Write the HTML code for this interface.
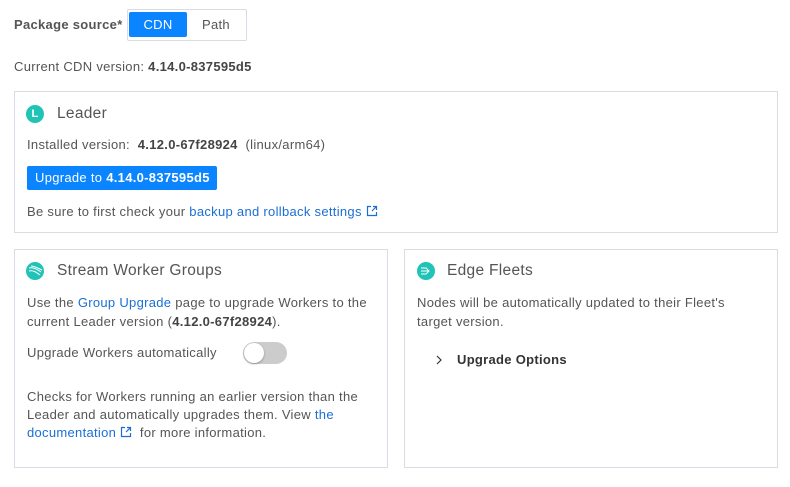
<!DOCTYPE html>
<html><head><style>
body{margin:0;width:790px;height:487px;background:#fff;font-family:"Liberation Sans",sans-serif;font-size:13px;color:#555;position:relative;overflow:hidden;letter-spacing:0.3px}
.a{position:absolute;white-space:nowrap;line-height:18px}
b{color:#444}
.box{position:absolute;border:1px solid #d6dde4;box-sizing:border-box}
a{color:#1a6fd6;text-decoration:none}
.t{font-size:15.5px;color:#555}
.ic{position:absolute;width:18px;height:18px;border-radius:50%;background:#21c3b6}
.ext{display:inline-block;vertical-align:-1px}
</style></head><body>
<div class="a" style="left:14px;top:16px;font-weight:bold;color:#555">Package source*</div>
<div class="box" style="left:127px;top:9px;width:120px;height:32px;border-radius:2px"></div>
<div class="a" style="left:129px;top:12px;width:58px;height:25px;background:#0a84ff;color:#fff;text-align:center;line-height:25px;border-radius:2px">CDN</div>
<div class="a" style="left:187px;top:12px;width:58px;height:25px;text-align:center;line-height:25px">Path</div>
<div class="a" style="left:14px;top:58px">Current CDN version: <b>4.14.0-837595d5</b></div>

<div class="box" style="left:14px;top:91px;width:764px;height:142px"></div>
<div class="ic" style="left:26px;top:105px;color:#fff;font-size:11px;font-weight:bold;text-align:center;line-height:18px">L</div>
<div class="a t" style="left:57px;top:105px">Leader</div>
<div class="a" style="left:27px;top:136px">Installed version:&nbsp; <b>4.12.0-67f28924</b>&nbsp; (linux/arm64)</div>
<div class="a" style="left:27px;top:166px;width:190px;height:24px;background:#0a84ff;color:#fff;line-height:24px;padding-left:8px;box-sizing:border-box;border-radius:2px">Upgrade to <b style="color:#fff">4.14.0-837595d5</b></div>
<div class="a" style="left:27px;top:203px">Be sure to first check your <a>backup and rollback settings</a> <svg class="ext" width="12" height="12" viewBox="0 0 12 12" fill="none" stroke="#1a6fd6" stroke-width="1.2"><path d="M5 1.5H1.5v9h9V7M7 1.5h3.5V5M10.5 1.5L6 6"/></svg></div>

<div class="box" style="left:14px;top:249px;width:374px;height:219px"></div>
<svg class="a" style="left:26px;top:262px" width="18" height="18" viewBox="0 0 18 18"><circle cx="9" cy="9" r="9" fill="#21c3b6"/><path d="M3 6c4-1 8 1 12 4M3 9c4-1 7 1 11 4M5 4c3 0 7 2 11 4" stroke="#fff" stroke-width="1" fill="none"/></svg>
<div class="a t" style="left:57px;top:262px">Stream Worker Groups</div>
<div class="a" style="left:27px;top:294px">Use the <a>Group Upgrade</a> page to upgrade Workers to the</div>
<div class="a" style="left:27px;top:313px">current Leader version (<b>4.12.0-67f28924</b>).</div>
<div class="a" style="left:27px;top:344px">Upgrade Workers automatically</div>
<div class="a" style="left:243px;top:342px;width:44px;height:22px;border-radius:11px;background:#ccc"></div>
<div class="a" style="left:244px;top:343px;width:20px;height:20px;border-radius:50%;background:#fff;box-shadow:0 1px 2px rgba(0,0,0,.3)"></div>
<div class="a" style="left:27px;top:388px">Checks for Workers running an earlier version than the</div>
<div class="a" style="left:27px;top:406px">Leader and automatically upgrades them. View <a>the</a></div>
<div class="a" style="left:27px;top:424px"><a>documentation</a> <svg class="ext" width="12" height="12" viewBox="0 0 12 12" fill="none" stroke="#1a6fd6" stroke-width="1.2"><path d="M5 1.5H1.5v9h9V7M7 1.5h3.5V5M10.5 1.5L6 6"/></svg>&nbsp; for more information.</div>

<div class="box" style="left:404px;top:249px;width:374px;height:219px"></div>
<svg class="a" style="left:417px;top:262px" width="18" height="18" viewBox="0 0 18 18"><circle cx="9" cy="9" r="9" fill="#21c3b6"/><path d="M4 6h5l3 3-3 3H4M4 9h8" stroke="#fff" stroke-width="1" fill="none"/></svg>
<div class="a t" style="left:447px;top:262px">Edge Fleets</div>
<div class="a" style="left:417px;top:294px">Nodes will be automatically updated to their Fleet's</div>
<div class="a" style="left:417px;top:313px">target version.</div>
<svg class="a" style="left:436px;top:355px" width="6" height="10" viewBox="0 0 6 10"><path d="M1 1l4 4-4 4" stroke="#333" stroke-width="1.2" fill="none"/></svg>
<div class="a" style="left:457px;top:351px;font-weight:bold;color:#333">Upgrade Options</div>
</body></html>
